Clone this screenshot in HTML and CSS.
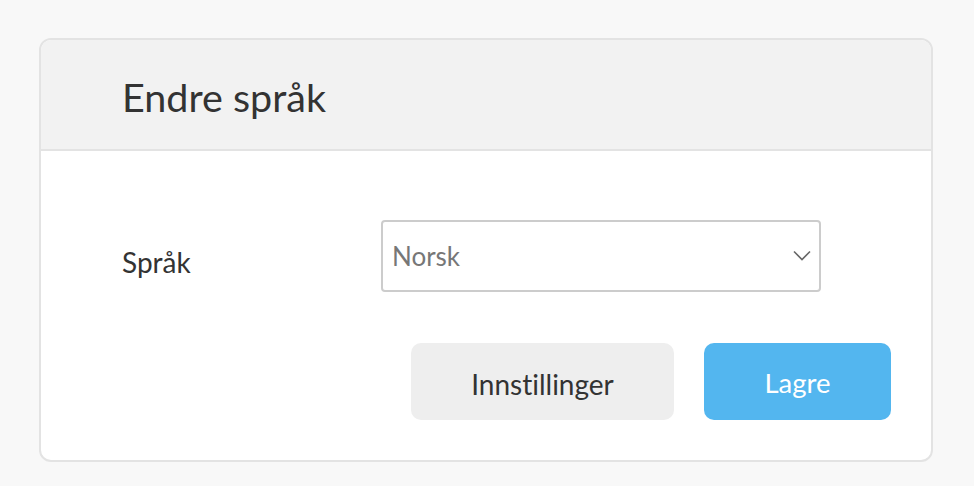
FILE: index.html
```html
<!DOCTYPE html>
<html lang="no">
<head>
<meta charset="utf-8">
<link rel="stylesheet" href="styles.css">
</head>
<body>
<div class="card">
  <div class="card-header">
    <h1 class="title">Endre språk</h1>
  </div>
  <div class="card-body">
    <div class="form-row">
      <label class="label">Språk</label>
      <div class="select">
        <span class="select-value">Norsk</span>
        <svg class="chevron" width="18" height="11" viewBox="0 0 18 11"><path d="M1 1.5 L9 9.5 L17 1.5" fill="none" stroke="#666" stroke-width="1.6"/></svg>
      </div>
    </div>
    <div class="actions">
      <button class="btn btn-secondary">Innstillinger</button>
      <button class="btn btn-primary">Lagre</button>
    </div>
  </div>
</div>
</body>
</html>
```

FILE: styles.css
```css
* { box-sizing: border-box; }
html, body { margin: 0; padding: 0; }
body {
  background: #f8f8f8;
  font-family: Lato, "Open Sans", sans-serif;
  font-variant-ligatures: none;
  color: #333;
  padding: 38px 0 0 39px;
}
.card {
  width: 894px;
  height: 424px;
  background: #fff;
  border: 2px solid #e3e3e3;
  border-radius: 12px;
  overflow: hidden;
}
.card-header {
  height: 111px;
  background: #f2f2f2;
  border-bottom: 2px solid #e3e3e3;
  padding-left: 81px;
  display: flex;
  align-items: center;
}
.title {
  margin: 0;
  font-weight: 400;
  font-size: 39.5px;
  color: #333;
  padding-top: 4px;
}
.card-body {
  padding: 69px 40px 0 81px;
}
.form-row {
  display: flex;
  align-items: center;
  height: 72px;
}
.label {
  width: 259px;
  font-size: 28px;
  color: #333;
  padding-top: 12px;
}
.select {
  width: 440px;
  height: 72px;
  border: 2px solid #cccccc;
  border-radius: 4px;
  display: flex;
  align-items: center;
  justify-content: space-between;
  padding: 0 8px 0 9px;
}
.select-value {
  font-size: 26px;
  color: #777;
}
.chevron { margin-bottom: 2px; }
.actions {
  display: flex;
  justify-content: flex-end;
  gap: 30px;
  margin-top: 51px;
}
.btn {
  border: none;
  height: 77px;
  border-radius: 10px;
  font-family: Lato, "Open Sans", sans-serif;
  font-variant-ligatures: none;
  padding: 0;
}
.btn-secondary {
  width: 263px;
  background: #eeeeee;
  color: #333;
  font-size: 28px;
  padding-top: 5px;
}
.btn-primary {
  width: 187px;
  background: #53b6ef;
  color: #fff;
  font-size: 27.5px;
  padding-top: 2px;
}
```
